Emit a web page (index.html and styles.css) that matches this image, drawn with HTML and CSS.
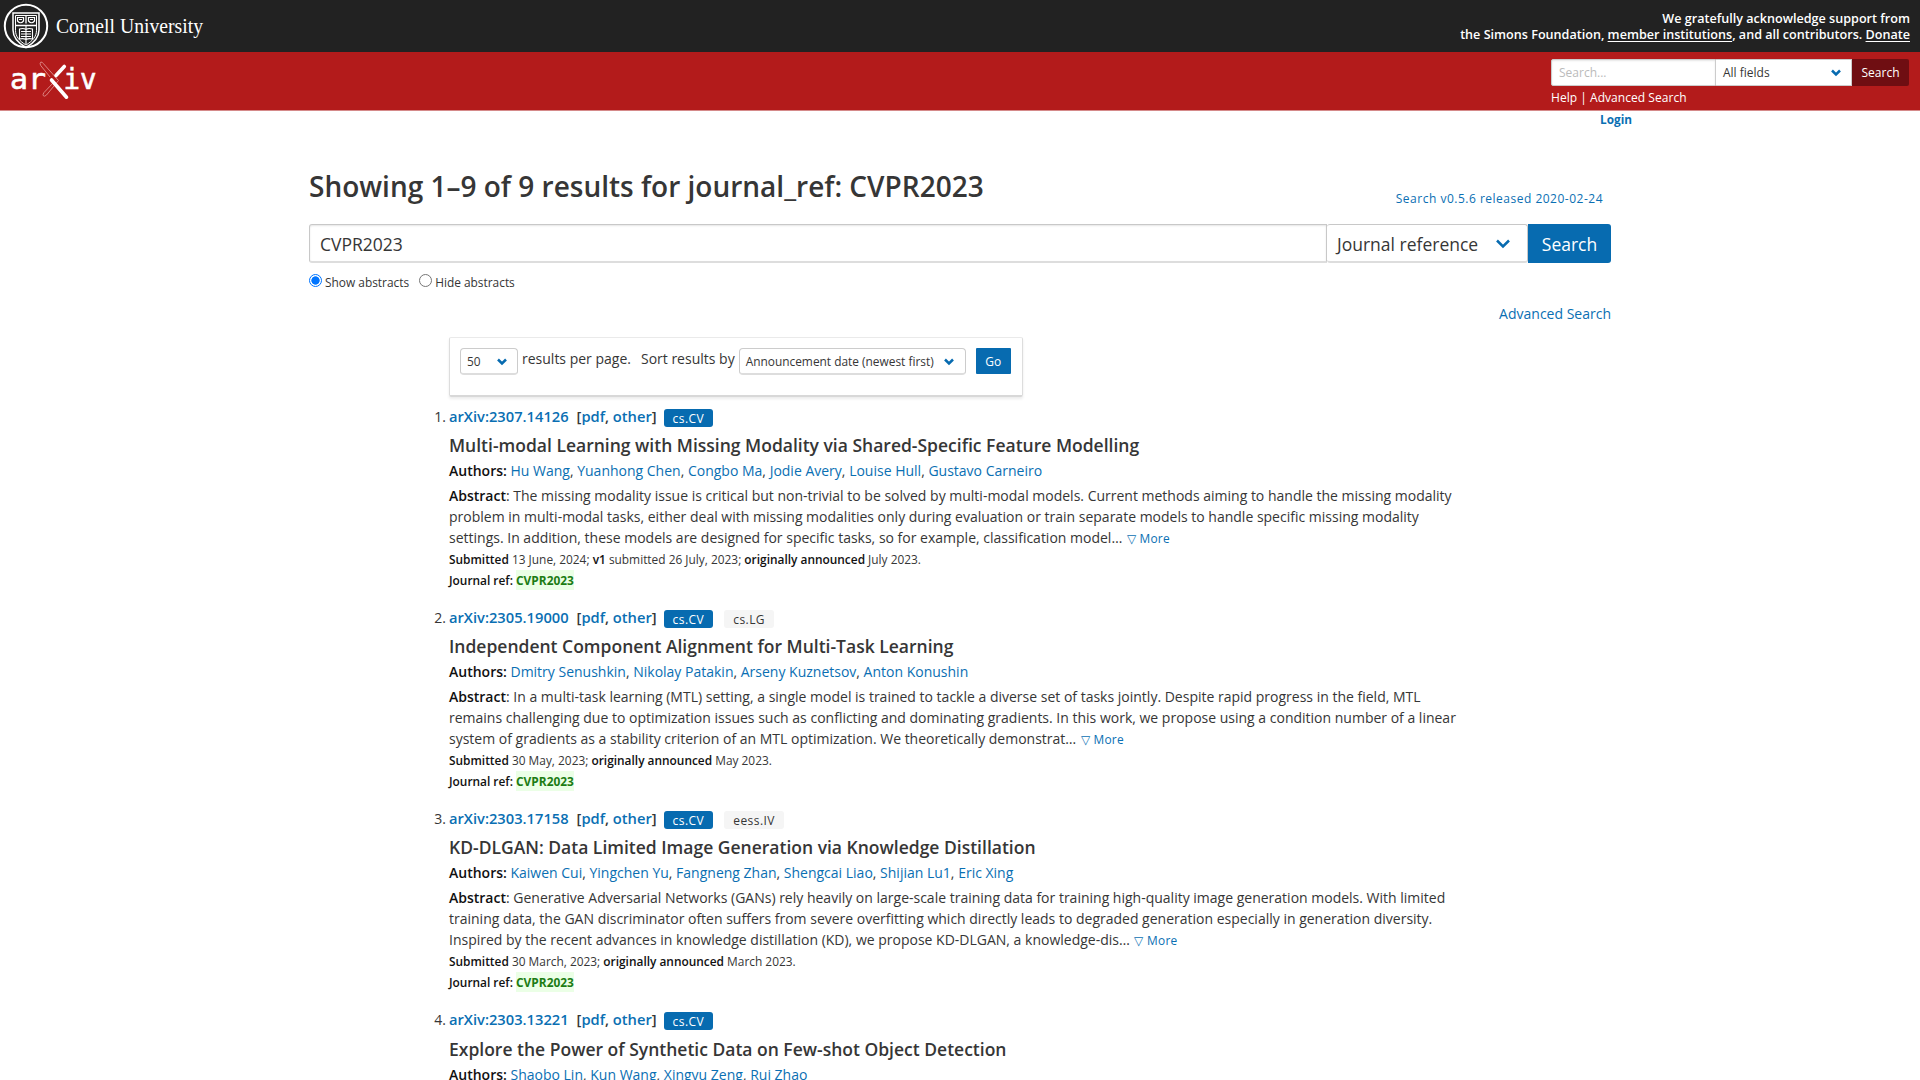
FILE: index.html
```html
<!DOCTYPE html>
<html lang="en">
<head>
<meta charset="utf-8">
<title>Search | arXiv e-print repository</title>
<link rel="stylesheet" href="styles.css">
</head>
<body>
<header>
  <div class="support-bar">
    <a class="cornell" href="#">
      <svg class="seal" width="46" height="46" viewBox="0 0 46 46" fill="none" stroke="#fff">
        <circle cx="23" cy="23" r="21.2" stroke-width="2"/>
        <path d="M10 10h26v17c0 8-5 13-13 17.500C15 40 10 35 10 27z" stroke-width="1.500"/>
        <path d="M12.500 12.500h21v15c0 6-4 10.500-10.500 14.500C16.500 38 12.500 33.500 12.500 27.500z" stroke-width="1"/>
        <path d="M12.500 22.500h21M23 12.500v8" stroke-width="1.300"/>
        <path d="M14.500 14.500h6v3.500q-3 3.500-6 0zM25.500 14.500h6v3.500q-3 3.500-6 0zM16 16.500h3M27 16.500h3" stroke-width="1.200"/>
        <path d="M16.500 26c3-1 5-.5 6.500.5 1.500-1 3.500-1.500 6.500-.5v10c-3-.7-5-.3-6.500.5-1.500-.8-3.500-1.200-6.500-.5zM23 23v18M18 28.500h10M18 31h10M18 33.500h10" stroke-width="1.100"/>
      </svg>
      <svg width="160" height="40" viewBox="0 0 160 40"><text class="cornell-name" x="0" y="27" textLength="147" lengthAdjust="spacingAndGlyphs">Cornell University</text></svg>
    </a>
    <div class="support">We gratefully acknowledge support from<br>the Simons Foundation, <a href="#">member institutions</a>, and all contributors. <a href="#">Donate</a></div>
  </div>
  <div class="brand-bar">
    <a href="#" class="logo">
      <svg width="90" height="42" viewBox="0 0 90 42">
        <text class="logo-text" x="0" y="29.500" textLength="36" lengthAdjust="spacingAndGlyphs">ar</text>
        <text class="logo-text" x="53.500" y="29.500" textLength="33" lengthAdjust="spacingAndGlyphs">iv</text>
        <path d="M30.700 3.200Q29.500 4.500 30.700 6.500L40 18M33.300 4.500 48.500 21.500 36.500 36Q34.500 38 33.300 36.700 32.500 35.500 34 33.500L44 23M33.300 4.500Q32 2.500 30.700 3.200" fill="none" stroke="#e08f8c" stroke-width=".9"/>
        <path d="M54.300 7.500 46 16.500M41.500 21 56.500 38.200" fill="none" stroke="#fff" stroke-width="3.600" stroke-linecap="round"/>
      </svg>
    </a>
    <form class="mini">
      <div class="row">
        <input class="mini-input" type="text" placeholder="Search...">
        <div class="mini-select">All fields<svg width="10" height="8" viewBox="0 0 10 8"><path d="M1 1.500 5 5.500 9 1.500"/></svg></div>
        <button class="mini-btn" type="button">Search</button>
      </div>
      <p><a href="#">Help</a> | <a href="#">Advanced Search</a></p>
    </form>
  </div>
</header>
<div class="login"><a href="#">Login</a></div>
<main>
  <div class="heading"><h1>Showing 1–9 of 9 results for journal_ref: CVPR2023</h1><a class="version" href="#">Search v0.5.6 released 2020-02-24</a></div>
  <div class="search">
    <input class="query" type="text" value="CVPR2023">
    <div class="field">Journal reference<svg width="16" height="10" viewBox="0 0 16 10"><path d="M2 1.500 8 7.500 14 1.500"/></svg></div>
    <button class="go-search" type="button">Search</button>
  </div>
  <div class="radios">
    <label><span class="radio on"></span>Show abstracts</label>
    <label><span class="radio"></span>Hide abstracts</label>
  </div>
  <p class="advanced"><a href="#">Advanced Search</a></p>
  <div class="results">
    <div class="sort">
      <div class="select per-page">50<svg width="10" height="8" viewBox="0 0 10 8"><path d="M1 1.500 5 5.500 9 1.500"/></svg></div>
      <span class="lbl per">results per page.</span><span class="lbl">Sort results by</span>
      <div class="select order">Announcement date (newest first)<svg width="10" height="8" viewBox="0 0 10 8"><path d="M1 1.500 5 5.500 9 1.500"/></svg></div>
      <button class="go" type="button">Go</button>
    </div>
    <ol>
      <li>
        <div class="id"><span class="num">1.</span><b><a href="#">arXiv:2307.14126</a></b><span class="links">[<a href="#">pdf</a>, <a href="#">other</a>]</span><span class="tag main">cs.CV</span></div>
        <p class="title">Multi-modal Learning with Missing Modality via Shared-Specific Feature Modelling</p>
        <p class="authors"><b>Authors:</b> <a href="#">Hu Wang</a>, <a href="#">Yuanhong Chen</a>, <a href="#">Congbo Ma</a>, <a href="#">Jodie Avery</a>, <a href="#">Louise Hull</a>, <a href="#">Gustavo Carneiro</a></p>
        <p class="abstract"><b>Abstract</b>: The missing modality issue is critical but non-trivial to be solved by multi-modal models. Current methods aiming to handle the missing modality<br>problem in multi-modal tasks, either deal with missing modalities only during evaluation or train separate models to handle specific missing modality<br>settings. In addition, these models are designed for specific tasks, so for example, classification model… <a class="more" href="#">▽ More</a></p>
        <p class="small"><b>Submitted</b> 13 June, 2024; <b>v1</b> submitted 26 July, 2023; <b>originally announced</b> July 2023.</p>
        <p class="small"><b>Journal ref:</b> <mark>CVPR2023</mark></p>
      </li>
      <li>
        <div class="id"><span class="num">2.</span><b><a href="#">arXiv:2305.19000</a></b><span class="links">[<a href="#">pdf</a>, <a href="#">other</a>]</span><span class="tag main">cs.CV</span><span class="tag">cs.LG</span></div>
        <p class="title">Independent Component Alignment for Multi-Task Learning</p>
        <p class="authors"><b>Authors:</b> <a href="#">Dmitry Senushkin</a>, <a href="#">Nikolay Patakin</a>, <a href="#">Arseny Kuznetsov</a>, <a href="#">Anton Konushin</a></p>
        <p class="abstract"><b>Abstract</b>: In a multi-task learning (MTL) setting, a single model is trained to tackle a diverse set of tasks jointly. Despite rapid progress in the field, MTL<br>remains challenging due to optimization issues such as conflicting and dominating gradients. In this work, we propose using a condition number of a linear<br>system of gradients as a stability criterion of an MTL optimization. We theoretically demonstrat… <a class="more" href="#">▽ More</a></p>
        <p class="small"><b>Submitted</b> 30 May, 2023; <b>originally announced</b> May 2023.</p>
        <p class="small"><b>Journal ref:</b> <mark>CVPR2023</mark></p>
      </li>
      <li>
        <div class="id"><span class="num">3.</span><b><a href="#">arXiv:2303.17158</a></b><span class="links">[<a href="#">pdf</a>, <a href="#">other</a>]</span><span class="tag main">cs.CV</span><span class="tag">eess.IV</span></div>
        <p class="title">KD-DLGAN: Data Limited Image Generation via Knowledge Distillation</p>
        <p class="authors"><b>Authors:</b> <a href="#">Kaiwen Cui</a>, <a href="#">Yingchen Yu</a>, <a href="#">Fangneng Zhan</a>, <a href="#">Shengcai Liao</a>, <a href="#">Shijian Lu1</a>, <a href="#">Eric Xing</a></p>
        <p class="abstract"><b>Abstract</b>: Generative Adversarial Networks (GANs) rely heavily on large-scale training data for training high-quality image generation models. With limited<br>training data, the GAN discriminator often suffers from severe overfitting which directly leads to degraded generation especially in generation diversity.<br>Inspired by the recent advances in knowledge distillation (KD), we propose KD-DLGAN, a knowledge-dis… <a class="more" href="#">▽ More</a></p>
        <p class="small"><b>Submitted</b> 30 March, 2023; <b>originally announced</b> March 2023.</p>
        <p class="small"><b>Journal ref:</b> <mark>CVPR2023</mark></p>
      </li>
      <li>
        <div class="id"><span class="num">4.</span><b><a href="#">arXiv:2303.13221</a></b><span class="links">[<a href="#">pdf</a>, <a href="#">other</a>]</span><span class="tag main">cs.CV</span></div>
        <p class="title">Explore the Power of Synthetic Data on Few-shot Object Detection</p>
        <p class="authors"><b>Authors:</b> <a href="#">Shaobo Lin</a>, <a href="#">Kun Wang</a>, <a href="#">Xingyu Zeng</a>, <a href="#">Rui Zhao</a></p>
      </li>
    </ol>
  </div>
</main>
</body>
</html>
```
FILE: styles.css
```css
*{box-sizing:border-box}
body{margin:0;height:1080px;overflow:hidden;background:#fff;color:#363636;font:14px/21px "Open Sans","Noto Sans",sans-serif}
a{color:#0a6fb3;text-decoration:none}
p,h1,ol{margin:0;padding:0}
b{font-weight:600;color:#111}
input,button{font-family:inherit;margin:0;outline:0}
svg{display:block}
.support-bar{height:52px;background:#222;display:flex;justify-content:space-between;align-items:center;padding:0 10px 0 3px}
.cornell{display:flex;align-items:center;gap:7px}
.cornell-name{font:21px "Palatino Linotype",Palatino,"Liberation Serif",serif;fill:#fff}
.logo-text{font:28px "DejaVu Sans Mono",monospace;fill:#fff;stroke:#fff;stroke-width:.6}
.support{color:#fff;text-align:right;font-weight:600;font-size:12.600px;line-height:16px;padding-top:2px}
.support a{color:#fff;text-decoration:underline;text-underline-offset:2px}
.brand-bar{height:59px;background:#b31b1b;border-bottom:1px solid #d58a8a;display:flex;justify-content:space-between;padding:7px 11px 0 10px}
.mini .row{display:flex;height:27px}
.mini{font-size:12px;color:#fff}
.mini a{color:#fff}
.mini p{line-height:18px;padding-top:3px;letter-spacing:.04px}
.mini-input{width:165px;border:1px solid #ccc;border-radius:2px 0 0 2px;padding:0 7px;font-size:12px;box-shadow:inset 0 1px 2px rgba(10,10,10,.1)}
.mini-input::placeholder{color:#bbb}
.mini-select{width:136px;background:#fff;color:#363636;border:1px solid #ccc;border-left:0;display:flex;align-items:center;justify-content:space-between;padding:0 10px 0 7px}
.mini-btn{width:57px;border:0;background:#6f0e12;color:#fff;font-size:12px;border-radius:0 2px 2px 0;padding:0}
.mini-select path,.select path{fill:none;stroke:#076bb0;stroke-width:2.500}
.login{height:52px;padding-left:1600px;font-size:11.800px;font-weight:700;line-height:17px}
main{width:1302px;margin:0 auto}
.heading{height:61px;display:flex;justify-content:space-between;align-items:flex-start;padding-right:8px}
h1{font-size:28px;line-height:32px;font-weight:600;padding-top:7px;white-space:nowrap}
.version{font-size:12px;letter-spacing:.5px;padding-top:25px;line-height:21px}
.search{display:flex;height:39px;font-size:17.500px}
.query{width:1018px;border:1px solid #c8c8c8;border-bottom:2px solid #ddd;border-radius:3px 0 0 3px;padding:2px 10px 0;font-size:17.500px;color:#363636;box-shadow:inset 0 1px 2px rgba(10,10,10,.1)}
.field{width:201px;border:1px solid #c8c8c8;border-left:0;border-bottom:2px solid #ddd;border-radius:3px;display:flex;align-items:center;justify-content:space-between;padding:2px 16px 0 10px}
.field path{fill:none;stroke:#076bb0;stroke-width:2.500}
.go-search{width:83px;border:0;background:#076bb0;color:#fff;font-size:17.500px;border-radius:0 3px 3px 0;padding:1px 0 0}
.radios{display:flex;gap:10px;font-size:11.900px;padding-top:9px;height:40px}
label{display:flex;gap:3px}
.radio{width:13px;height:13px;border:1px solid #767676;border-radius:50%;margin-top:2px}
.radio.on{border-color:#0075ff;background:radial-gradient(circle,#0075ff 0 3.800px,#fff 4.500px)}
.advanced{text-align:right;height:34px}
.results{width:1020px;margin-left:140px}
.sort{width:574px;height:60px;border:1px solid #ddd;border-top-color:#eaeaea;border-bottom:2px solid #d8d8d8;border-radius:2px;box-shadow:0 2px 3px rgba(10,10,10,.08);display:flex;align-items:flex-start;padding:10px 10px 0;white-space:nowrap}
.select{height:27px;border:1px solid #ccc;border-bottom:2px solid #ddd;border-radius:4px;font-size:11.900px;display:flex;align-items:center;justify-content:space-between}
.per-page{width:58px;padding:1px 10px 0 6px}
.order{width:227px;padding:1px 11px 0 6px;margin-left:4px}
.lbl{line-height:21px}
.per{margin:0 10px 0 4px}
.go{width:35px;height:26px;margin-left:10px;border:0;border-radius:1px;background:#076bb0;color:#fff;font-size:12px;padding:1px 0 0}
ol{list-style:none;margin-top:8px}
li{height:201.200px}
li:last-child{height:75px}
.id{display:flex;align-items:center;height:22px;font-size:14.700px;font-weight:600;white-space:nowrap}
.id .num{width:20px;margin-left:-20px;padding-right:3px;text-align:right;font-size:14px;font-weight:400}
.links{margin-left:8px}
.tag{height:18px;margin-left:7px;padding:0 9px;border-radius:3px;background:#f5f5f5;font-size:12px;font-weight:400;line-height:19px;letter-spacing:.45px;margin-top:3px}
.tag+.tag{margin-left:11px}
.tag.main{background:#076bb0;color:#fff}
.title{font-size:17.500px;font-weight:600;line-height:26px;padding-top:5px;white-space:nowrap}
.authors{padding-top:2px}
.abstract{white-space:nowrap;padding-top:4px}
.more{font-size:11.900px;letter-spacing:.25px;margin-left:1px}
.small{font-size:11.900px;line-height:21px}
mark{background:#ebffe6;color:#1c7c14;font-weight:700;padding:2px 0}
```
